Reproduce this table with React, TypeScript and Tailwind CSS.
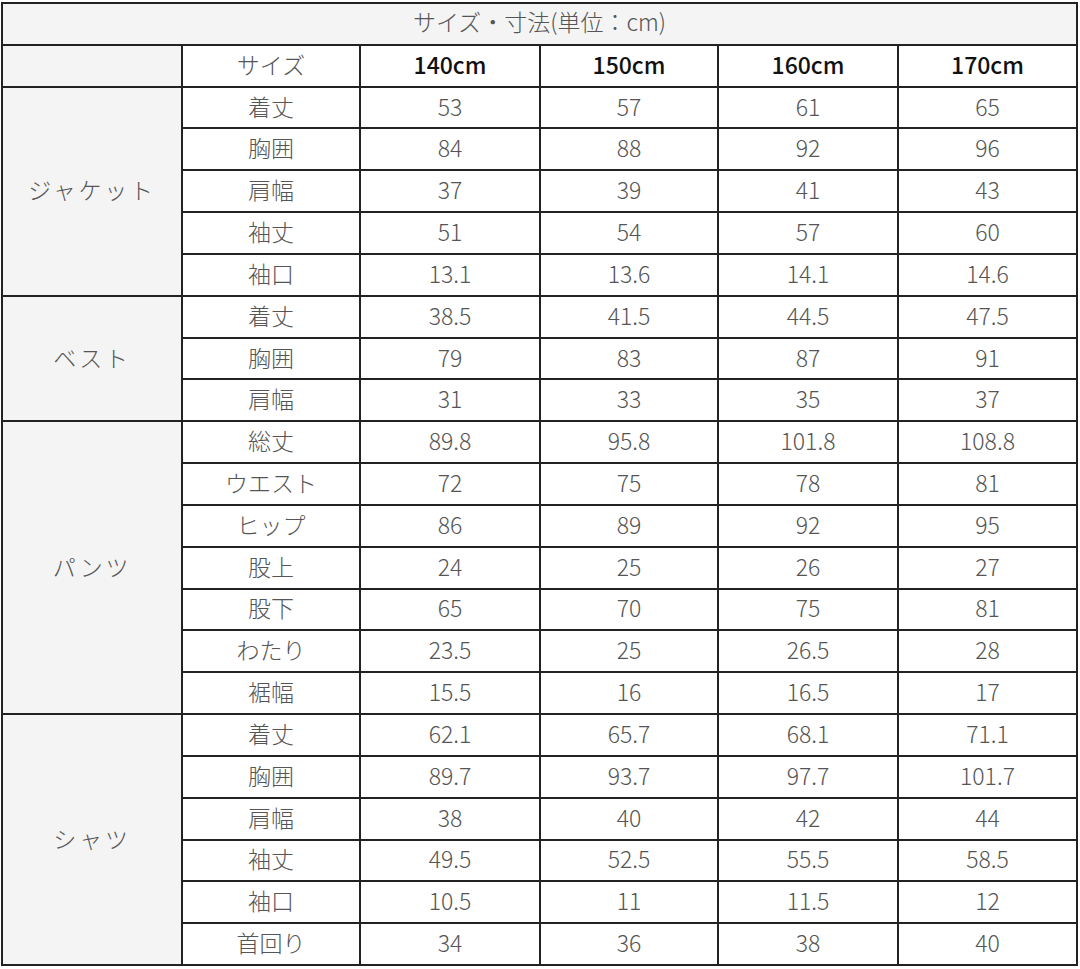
const sizes = ['140cm', '150cm', '160cm', '170cm'];

interface Group {
  name: string;
  rows: [string, string, string, string, string][];
}

const groups: Group[] = [
  {
    name: 'ジャケット',
    rows: [
      ['着丈', '53', '57', '61', '65'],
      ['胸囲', '84', '88', '92', '96'],
      ['肩幅', '37', '39', '41', '43'],
      ['袖丈', '51', '54', '57', '60'],
      ['袖口', '13.1', '13.6', '14.1', '14.6'],
    ],
  },
  {
    name: 'ベスト',
    rows: [
      ['着丈', '38.5', '41.5', '44.5', '47.5'],
      ['胸囲', '79', '83', '87', '91'],
      ['肩幅', '31', '33', '35', '37'],
    ],
  },
  {
    name: 'パンツ',
    rows: [
      ['総丈', '89.8', '95.8', '101.8', '108.8'],
      ['ウエスト', '72', '75', '78', '81'],
      ['ヒップ', '86', '89', '92', '95'],
      ['股上', '24', '25', '26', '27'],
      ['股下', '65', '70', '75', '81'],
      ['わたり', '23.5', '25', '26.5', '28'],
      ['裾幅', '15.5', '16', '16.5', '17'],
    ],
  },
  {
    name: 'シャツ',
    rows: [
      ['着丈', '62.1', '65.7', '68.1', '71.1'],
      ['胸囲', '89.7', '93.7', '97.7', '101.7'],
      ['肩幅', '38', '40', '42', '44'],
      ['袖丈', '49.5', '52.5', '55.5', '58.5'],
      ['袖口', '10.5', '11', '11.5', '12'],
      ['首回り', '34', '36', '38', '40'],
    ],
  },
];

const spanClass: Record<number, string> = {
  3: 'row-span-3',
  5: 'row-span-5',
  6: 'row-span-6',
  7: 'row-span-7',
};

const cell = 'flex items-center justify-center bg-white pb-[3px]';

export default function App() {
  return (
    <div className="w-[1080px] h-[969px] bg-white pt-[2px] pl-[1px]">
      <div
        className="grid h-[964px] w-[1077px] grid-cols-[178px_176px_178px_176px_178px_177px] grid-rows-[repeat(23,minmax(0,1fr))] gap-[2px] bg-[#222] p-[2px] text-[23px] font-light leading-none text-[#555]"
        style={{ fontFamily: '"Noto Sans CJK JP", "Noto Sans", sans-serif' }}
      >
        <div className="col-span-6 flex items-center justify-center bg-[#f4f4f4] pb-[5px] text-[23px]">
          サイズ・寸法(単位：cm)
        </div>

        <div className="bg-[#f4f4f4]" />
        <div className={cell}>サイズ</div>
        {sizes.map(s => (
          <div key={s} className={`${cell} text-[23px] font-medium text-[#111]`}>
            {s}
          </div>
        ))}

        {groups.map(g => (
          <>
            <div
              key={g.name}
              className={`${spanClass[g.rows.length]} flex items-center justify-center bg-[#f4f4f4] pb-[3px] tracking-[0.12em]`}
            >
              {g.name}
            </div>
            {g.rows.map((r, i) => (
              <>
                {r.map((v, j) => (
                  <div key={`${g.name}-${i}-${j}`} className={cell}>
                    {v}
                  </div>
                ))}
              </>
            ))}
          </>
        ))}
      </div>
    </div>
  );
}
